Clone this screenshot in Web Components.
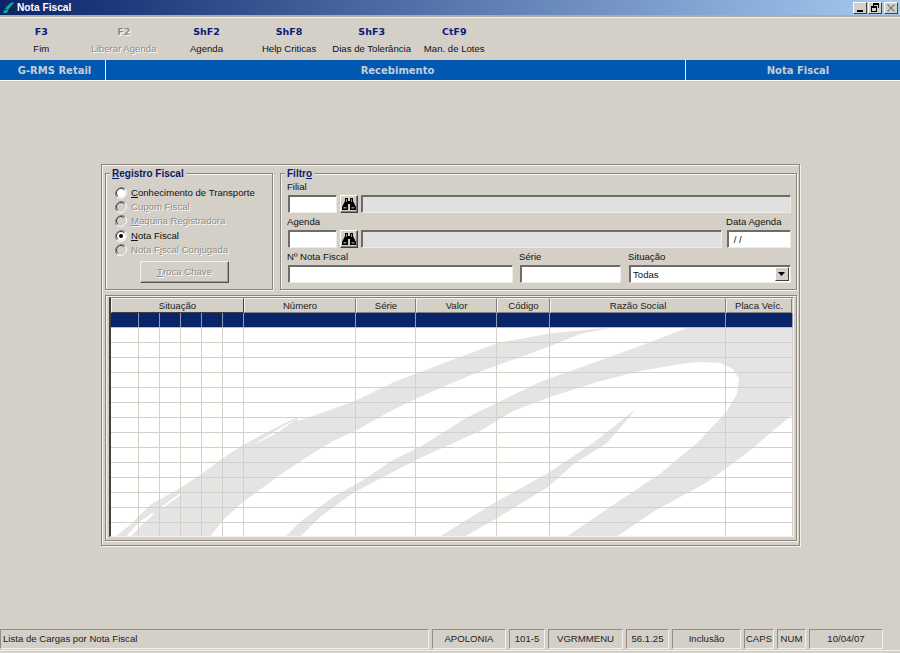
<!DOCTYPE html>
<html lang="pt">
<head>
<meta charset="utf-8">
<title>Nota Fiscal</title>
<style>
  html, body { margin: 0; height: 100%; overflow: hidden; }
  body { background: #d4d0c8; font: 9.6px "Liberation Sans", Arial, sans-serif; color: #111; }
  u { text-decoration: underline; }
</style>
</head>
<body>
<rms-window>
  <rms-titlebar>Nota Fiscal</rms-titlebar>
  <rms-toolbar>
    <tool-item key="F3" label="Fim"></tool-item>
    <tool-item key="F2" label="Liberar Agenda" disabled></tool-item>
    <tool-item key="ShF2" label="Agenda"></tool-item>
    <tool-item key="ShF8" label="Help Criticas"></tool-item>
    <tool-item key="ShF3" label="Dias de Tolerância"></tool-item>
    <tool-item key="CtF9" label="Man. de Lotes"></tool-item>
  </rms-toolbar>
  <rms-sectionbar></rms-sectionbar>
  <rms-form>
    <group-box slot="left" width="168" pad="12px 0 0 9px">
      <u slot="legend">R</u><span slot="legend">egistro Fiscal</span>
      <radio-opt><u>C</u>onhecimento de Transporte</radio-opt>
      <radio-opt disabled>Cu<u>p</u>om Fiscal</radio-opt>
      <radio-opt disabled><u>M</u>aquina Registradora</radio-opt>
      <radio-opt checked><u>N</u>ota Fiscal</radio-opt>
      <radio-opt disabled>Nota F<u>i</u>scal Conjugada</radio-opt>
      <rms-button><u>T</u>roca Chave</rms-button>
    </group-box>
    <group-box slot="right" width="517" pad="7px 5px 0 7px">
      <span slot="legend">Filtr</span><u slot="legend">o</u>
      <filter-row>
        <rms-field label="Filial" width="49"></rms-field>
        <find-button></find-button>
        <rms-field readonly grow></rms-field>
      </filter-row>
      <filter-row>
        <rms-field label="Agenda" width="49"></rms-field>
        <find-button></find-button>
        <rms-field readonly grow></rms-field>
        <rms-field label="Data Agenda" value="&nbsp;/ /" width="64" style="margin-left:2px"></rms-field>
      </filter-row>
      <filter-row>
        <rms-field label="Nº Nota Fiscal" width="225"></rms-field>
        <rms-field label="Série" width="101" style="margin-left:4px"></rms-field>
        <rms-field label="Situação" value="Todas" combo width="162" style="margin-left:5px"></rms-field>
      </filter-row>
    </group-box>
    <data-grid slot="grid"></data-grid>
  </rms-form>
  <rms-statusbar>
    <status-cell width="429" left>Lista de Cargas por Nota Fiscal</status-cell>
    <status-cell width="74">APOLONIA</status-cell>
    <status-cell width="36">101-5</status-cell>
    <status-cell width="75">VGRMMENU</status-cell>
    <status-cell width="43">56.1.25</status-cell>
    <status-cell width="69">Inclusão</status-cell>
    <status-cell width="30">CAPS</status-cell>
    <status-cell width="29">NUM</status-cell>
    <status-cell width="74">10/04/07</status-cell>
  </rms-statusbar>
</rms-window>

<script>
class RmsWindow extends HTMLElement {
  connectedCallback() {
    this.attachShadow({ mode: 'open' });
    this.shadowRoot.innerHTML = `
      <style>
        :host { display: flex; flex-direction: column; height: 100vh; }
      </style>
      <slot></slot>
    `;
  }
}

class RmsTitlebar extends HTMLElement {
  connectedCallback() {
    this.attachShadow({ mode: 'open' });
    this.shadowRoot.innerHTML = `
      <style>
        :host {
          display: flex; align-items: center; height: 15px; flex: none;
          background: linear-gradient(90deg, #0a246a, #a6caf0);
          color: #fff; font: bold 10.2px "Liberation Sans", sans-serif;
          box-shadow: 0 2px 0 #aeaba5, 0 3px 0 #f2f0ea; margin-bottom: 3px;
          padding-left: 2px;
        }
        .icon { width: 13px; height: 13px; margin-right: 2px; flex: none; }
        .title { flex: 1; }
        .btns { display: flex; gap: 0; margin-right: 2px; }
        .btn {
          width: 14px; height: 12px; margin-left: 1px; background: #d4d0c8; box-sizing: border-box;
          border: 1px solid; border-color: #fff #404040 #404040 #fff;
          display: flex; align-items: center; justify-content: center;
        }
        .btn:last-child { margin-left: 2px; }
        svg { display: block; }
      </style>
      <svg class="icon" viewBox="0 0 13 13">
        <path d="M1 12 C3 7 6 3 11 1 L12 2 C9 5 6 8 5 12 Z" fill="#12a7a0"/>
        <path d="M0 8h5v1H0zM7 7h5v1H7zM7 9h5v1H7z" fill="#0b2a3a"/>
      </svg>
      <div class="title"><slot></slot></div>
      <div class="btns">
        <div class="btn"><svg width="10" height="8" viewBox="0 0 10 8"><path d="M2 6h6v2H2z" fill="#000"/></svg></div>
        <div class="btn"><svg width="10" height="9" viewBox="0 0 10 9"><path d="M3 0h6v5H8V2H4v1H3zM1 3h6v6H1zM2 5v3h4V5z" fill="#000" fill-rule="evenodd"/></svg></div>
        <div class="btn"><svg width="10" height="8" viewBox="0 0 10 8"><path d="M1.5 .5l7 7M8.5 .5l-7 7" stroke="#808080" stroke-width="1.4"/></svg></div>
      </div>
    `;
  }
}

class RmsToolbar extends HTMLElement {
  connectedCallback() {
    this.attachShadow({ mode: 'open' });
    this.shadowRoot.innerHTML = `
      <style>
        :host { display: flex; height: 41px; flex: none; }
      </style>
      <slot></slot>
    `;
  }
}

class ToolItem extends HTMLElement {
  connectedCallback() {
    this.attachShadow({ mode: 'open' });
    this.shadowRoot.innerHTML = `
      <style>
        :host { display: block; width: 82.6px; text-align: center; }
        .key {
          margin-top: 8px; height: 12px; line-height: 12px;
          font: bold 9.5px/12px "DejaVu Sans", sans-serif; color: #0a1a78;
        }
        .label { margin-top: 4px; line-height: 13px; font-size: 9.6px; color: #111; white-space: nowrap; }
        :host([disabled]) .key, :host([disabled]) .label { color: #8f8c86; text-shadow: 1px 1px 0 #fff; }
      </style>
      <div class="key">${this.getAttribute('key')}</div>
      <div class="label">${this.getAttribute('label')}</div>
    `;
  }
}

class RmsSectionbar extends HTMLElement {
  connectedCallback() {
    this.attachShadow({ mode: 'open' });
    this.shadowRoot.innerHTML = `
      <style>
        :host {
          display: flex; height: 20px; flex: none; gap: 1px; background: #e8ecf4;
          border-top: 1px solid #c6d3e6; border-bottom: 1px solid #fff; margin-bottom: 1px;
          font: bold 10px/22px "DejaVu Sans", sans-serif; color: #c4cedc;
        }
        div { background: #0058b0; text-align: center; white-space: nowrap; overflow: hidden; height: 20px; box-sizing: border-box; }
        .a { width: 105px; padding-left: 4px; }
        .b { width: 579px; padding-left: 4px; }
        .c { flex: 1; padding-left: 10px; }
      </style>
      <div class="a">G-RMS Retail</div>
      <div class="b">Recebimento</div>
      <div class="c">Nota Fiscal</div>
    `;
  }
}

class RmsForm extends HTMLElement {
  connectedCallback() {
    this.attachShadow({ mode: 'open' });
    this.shadowRoot.innerHTML = `
      <style>
        :host { display: block; flex: 1; padding: 82px 0 0 101px; }
        .frame {
          width: 699px; height: 382px; box-sizing: border-box;
          border: 1px solid #8a8780; box-shadow: inset 1px 1px 0 #f4f2ec, 1px 1px 0 #f4f2ec;
          padding: 8px 2px 0 3px;
        }
        .top { display: flex; gap: 7px; height: 117px; margin-bottom: 5px; }
      </style>
      <div class="frame">
        <div class="top"><slot name="left"></slot><slot name="right"></slot></div>
        <slot name="grid"></slot>
      </div>
    `;
  }
}

class GroupBox extends HTMLElement {
  connectedCallback() {
    this.attachShadow({ mode: 'open' });
    this.shadowRoot.innerHTML = `
      <style>
        :host {
          display: block; position: relative; box-sizing: border-box;
          width: ${this.getAttribute('width')}px; height: 117px;
          border: 1px solid #8a8780; box-shadow: inset 1px 1px 0 #f4f2ec, 1px 1px 0 #f4f2ec;
          padding: ${this.getAttribute('pad')};
        }
        .legend {
          position: absolute; left: 4px; top: -6px; padding: 0 2px; background: #d4d0c8;
          font: bold 10px/12px "Liberation Sans", sans-serif; color: #0a1a68;
        }
      </style>
      <div class="legend"><slot name="legend"></slot></div>
      <slot></slot>
    `;
  }
}

class RadioOpt extends HTMLElement {
  connectedCallback() {
    this.attachShadow({ mode: 'open' });
    const dot = this.hasAttribute('checked') ? '<circle cx="6" cy="6" r="2" fill="#000"/>' : '';
    const face = this.hasAttribute('disabled') ? '#d4d0c8' : '#fff';
    this.shadowRoot.innerHTML = `
      <style>
        :host { display: flex; align-items: center; height: 14.2px; white-space: nowrap; }
        svg { width: 12px; height: 12px; margin-right: 4px; flex: none; }
        span { position: relative; top: -.5px; }
        :host([disabled]) { color: #8f8c86; text-shadow: 1px 1px 0 #fff; }
      </style>
      <svg viewBox="0 0 12 12">
        <path d="M10.2 1.8A6 6 0 0 0 1.8 10.2" fill="none" stroke="#808080"/>
        <path d="M1.8 10.2A6 6 0 0 0 10.2 1.8" fill="none" stroke="#fff"/>
        <circle cx="6" cy="6" r="4.5" fill="${face}"/>
        <path d="M9.2 2.8A4.5 4.5 0 0 0 2.8 9.2" fill="none" stroke="#404040"/>
        ${dot}
      </svg>
      <span><slot></slot></span>
    `;
  }
}

class RmsButton extends HTMLElement {
  connectedCallback() {
    this.attachShadow({ mode: 'open' });
    this.shadowRoot.innerHTML = `
      <style>
        :host {
          display: flex; align-items: center; justify-content: center; box-sizing: border-box;
          width: 89px; height: 22px; margin: 4px 0 0 25px;
          border: 1px solid; border-color: #f4f2ec #555 #555 #f4f2ec;
          box-shadow: inset -1px -1px 0 #a09d96;
          color: #8f8c86; text-shadow: 1px 1px 0 #fff;
        }
      </style>
      <slot></slot>
    `;
  }
}

class FilterRow extends HTMLElement {
  connectedCallback() {
    this.attachShadow({ mode: 'open' });
    this.shadowRoot.innerHTML = `
      <style>
        :host { display: flex; align-items: flex-end; gap: 3px; height: 32px; margin-bottom: 3px; }
      </style>
      <slot></slot>
    `;
  }
}

class RmsField extends HTMLElement {
  connectedCallback() {
    this.attachShadow({ mode: 'open' });
    const width = this.getAttribute('width');
    const label = this.getAttribute('label') || '';
    const value = this.getAttribute('value') || '';
    this.shadowRoot.innerHTML = `
      <style>
        :host { display: block; flex: ${this.hasAttribute('grow') ? '1' : 'none'}; ${width ? `width:${width}px;` : ''} }
        label { display: block; height: 14px; line-height: 11px; white-space: nowrap; margin-left: -1px; }
        .box {
          position: relative; box-sizing: border-box; height: 18px; background: #fff;
          border: 1px solid; border-color: #6e6c68 #eeece6 #eeece6 #6e6c68;
          box-shadow: inset 1px 1px 0 #6e6c68;
          padding: 2px 3px; line-height: 13px; white-space: nowrap;
        }
        :host([readonly]) .box { background: #e0e0e0; }
        .arrow {
          position: absolute; right: 1px; top: 1px; width: 14px; height: 14px; box-sizing: border-box;
          background: #d4d0c8; border: 1px solid; border-color: #fff #404040 #404040 #fff;
          display: flex; align-items: center; justify-content: center;
        }
      </style>
      ${label ? `<label>${label}</label>` : ''}
      <div class="box">${value}${this.hasAttribute('combo') ? '<div class="arrow"><svg width="8" height="4" viewBox="0 0 8 4"><path d="M0 0h7L3.5 4z" fill="#000"/></svg></div>' : ''}</div>
    `;
  }
}

class FindButton extends HTMLElement {
  connectedCallback() {
    this.attachShadow({ mode: 'open' });
    this.shadowRoot.innerHTML = `
      <style>
        :host {
          display: flex; align-items: center; justify-content: center; flex: none; box-sizing: border-box;
          width: 18px; height: 18px; background: #d4d0c8;
          border: 1px solid; border-color: #fff #404040 #404040 #fff; box-shadow: inset -1px -1px 0 #808080;
        }
        svg { display: block; }
      </style>
      <svg width="14" height="12" viewBox="0 0 14 12">
        <path d="M3 0h3v3h2V0h3v3l1 2 2 4v3H8V6H6v6H0V9l2-4 1-2z" fill="#000"/>
        <path d="M4 1h1v3H4zM9 1h1v3H9z" fill="#8a8780"/>
        <path d="M1.5 9h3v1.5h-3zM9.5 9h3v1.5h-3z" fill="#8a8780"/>
      </svg>
    `;
  }
}

class DataGrid extends HTMLElement {
  connectedCallback() {
    this.attachShadow({ mode: 'open' });
    const widths = [28, 21, 21, 21, 21, 21, 112, 60, 81, 53, 176, 67];
    const tmpl = widths.map(w => w + 'px').join(' ');
    const cells = widths.map(() => '<i></i>').join('');
    let rows = `<div class="row sel">${cells}</div>`;
    for (let i = 0; i < 14; i++) rows += `<div class="row">${cells}</div>`;
    this.shadowRoot.innerHTML = `
      <style>
        :host {
          display: block; box-sizing: border-box; width: 692px; height: 246px;
          border: 1px solid #8a8780; box-shadow: inset 1px 1px 0 #f4f2ec, 1px 1px 0 #f4f2ec;
          padding: 1px 2px 0 3px;
        }
        .grid {
          box-sizing: border-box; height: 240px; width: 685px; overflow: hidden;
          border-left: 2px solid #404040; border-top: 1px solid #808080; border-right: 1px solid #f4f2ec;
          border-bottom: 1px solid #f4f2ec;
        }
        .head {
          display: grid; grid-template-columns: 133px 112px 60px 81px 53px 176px 66px;
          height: 15px;
        }
        .head div {
          box-sizing: border-box; text-align: center; line-height: 13px; color: #222;
          border: 1px solid; border-color: #f4f2ec #808080 #808080 #f4f2ec;
        }
        .head div:first-child { border-right-color: #404040; border-bottom-color: #404040; }
        .body { position: relative; height: 224px; overflow: hidden; background: #fff; }
        svg { position: absolute; left: 0; top: 0; width: 682px; height: 224px; }
        .row {
          position: relative; display: grid; grid-template-columns: ${tmpl}; height: 15px;
          box-sizing: border-box; border-bottom: 1px solid #d4d0c8;
        }
        .row i { display: block; border-right: 1px solid #d4d0c8; }
        .row.sel { background: #0a246a; border-bottom-color: #b9bfd0; }
        .row.sel i { border-right-color: #8f9ab8; }
      </style>
      <div class="grid">
        <div class="head">
          <div>Situação</div><div>Número</div><div>Série</div><div>Valor</div>
          <div>Código</div><div>Razão Social</div><div>Placa Veíc.</div>
        </div>
        <div class="body">
          <svg viewBox="111 313 682 224" fill="#e3e4e3">
            <path d="M115 537 L130 525 L150 505 L180 488 L200 475 L223 458 L243 445 L267 432 L297 417 L298 421 L330 410 L357 400 L394 382 L444 363 L498 343 L552 333 L607 328 L625 328 L610 328 L580 334 L548 347 L471 375 L415 399 L387 413 L357 430 L333 441 L307 457 L280 475 L243 502 L223 520 L210 537 Z"/>
            <path d="M285 537 L300 522 L333 497 L360 482 L393 460 L420 447 L466 418 L480 411 L540 382 L590 364 L640 346 L687 328 L793 328 L793 414 L747 453 L706 483 L656 510 L616 537 L566 537 L616 503 L661 473 L697 443 L727 411 L737 394 L739 379 L733 369 L720 363 L700 362 L680 364 L640 371 L597 382 L550 397 L513 411 L480 431 L420 458 L387 475 L353 493 L320 517 L300 537 Z"/>
            <path d="M439 537 L494 503 L548 473 L593 443 L637 408 L607 443 L575 463 L548 487 L494 520 L464 537 Z"/>
            <path d="M296 419 L280 428 L255 444 L258 443 L280 431 Z M180 493 L160 508 L163 508 L182 494 Z M152 513 L138 523 L126 537 L130 537 L142 525 L154 514 Z" fill="#fff"/>
          </svg>
          ${rows}
        </div>
      </div>
    `;
  }
}

class RmsStatusbar extends HTMLElement {
  connectedCallback() {
    this.attachShadow({ mode: 'open' });
    this.shadowRoot.innerHTML = `
      <style>
        :host {
          display: flex; gap: 3px; flex: none; height: 24px; box-sizing: border-box; padding-bottom: 4px;
          background: linear-gradient(#d4d0c8 21px, #f0eee8 21px, #f0eee8 22px, #d4d0c8 22px);
        }
      </style>
      <slot></slot>
    `;
  }
}

class StatusCell extends HTMLElement {
  connectedCallback() {
    this.attachShadow({ mode: 'open' });
    this.shadowRoot.innerHTML = `
      <style>
        :host {
          display: block; box-sizing: border-box; width: ${this.getAttribute('width')}px; height: 20px;
          border: 1px solid; border-color: #908d86 #f4f2ec #f4f2ec #908d86;
          text-align: center; line-height: 18px; color: #222; white-space: nowrap;
        }
        :host([left]) { text-align: left; padding-left: 2px; }
      </style>
      <slot></slot>
    `;
  }
}

customElements.define('rms-window', RmsWindow);
customElements.define('rms-titlebar', RmsTitlebar);
customElements.define('rms-toolbar', RmsToolbar);
customElements.define('tool-item', ToolItem);
customElements.define('rms-sectionbar', RmsSectionbar);
customElements.define('rms-form', RmsForm);
customElements.define('group-box', GroupBox);
customElements.define('radio-opt', RadioOpt);
customElements.define('rms-button', RmsButton);
customElements.define('filter-row', FilterRow);
customElements.define('rms-field', RmsField);
customElements.define('find-button', FindButton);
customElements.define('data-grid', DataGrid);
customElements.define('rms-statusbar', RmsStatusbar);
customElements.define('status-cell', StatusCell);
</script>
</body>
</html>
